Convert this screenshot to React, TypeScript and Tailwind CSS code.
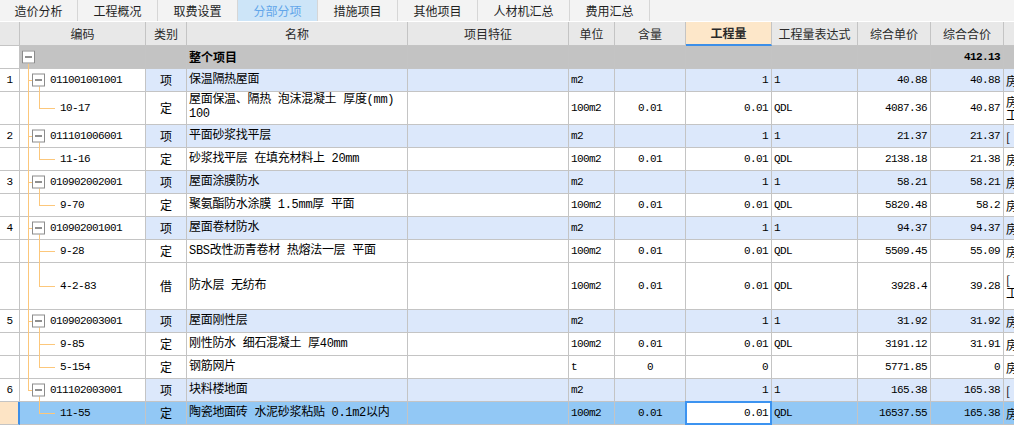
import type { ReactNode } from 'react'
import clsx from 'clsx'

const TABS = [
  { label: '造价分析', w: 'w-[78px]' },
  { label: '工程概况', w: 'w-[80px]' },
  { label: '取费设置', w: 'w-[80px]' },
  { label: '分部分项', w: 'w-[80px]', active: true },
  { label: '措施项目', w: 'w-[80px]' },
  { label: '其他项目', w: 'w-[80px]' },
  { label: '人材机汇总', w: 'w-[92px]' },
  { label: '费用汇总', w: 'w-[80px]' },
]

// column widths incl. right grid line
const W = [
  'w-[20px]',
  'w-[126px]',
  'w-[41px]',
  'w-[221px]',
  'w-[161px]',
  'w-[46px]',
  'w-[71px]',
  'w-[86px]',
  'w-[86px]',
  'w-[73px]',
  'w-[73px]',
  'w-[120px]',
]

const HEADS = ['', '编码', '类别', '名称', '项目特征', '单位', '含量', '工程量', '工程量表达式', '综合单价', '综合合价', '']

const NUM = "font-['Liberation_Mono','Noto_Sans_CJK_SC',monospace] text-[11px] tracking-[-0.6px]"
const MIX = "font-['Liberation_Mono','Noto_Sans_CJK_SC',monospace] text-[12px] tracking-[-0.3px]"
const LINE = 'bg-[#fcc77b]'

type Row = {
  kind: 'item' | 'sub'
  num?: string
  code: string
  cat: string
  name: string[]
  unit: string
  content?: string
  qty: string
  expr?: string
  price: string
  total: string
  tail: string[]
  h: string
  main: 'full' | 'half' | 'none'
  sub?: 'full' | 'half'
  sel?: boolean
  nameTop?: boolean
}

const ROWS: Row[] = [
  { kind: 'item', num: '1', code: '011001001001', cat: '项', name: ['保温隔热屋面'], unit: 'm2', qty: '1', expr: '1', price: '40.88', total: '40.88', tail: ['房'], h: 'h-[23px]', main: 'full' },
  { kind: 'sub', code: '10-17', cat: '定', name: ['屋面保温、隔热 泡沫混凝土 厚度(mm)', '100'], unit: '100m2', content: '0.01', qty: '0.01', expr: 'QDL', price: '4087.36', total: '40.87', tail: ['房', '工'], h: 'h-[33px]', main: 'full', sub: 'half', nameTop: true },
  { kind: 'item', num: '2', code: '011101006001', cat: '项', name: ['平面砂浆找平层'], unit: 'm2', qty: '1', expr: '1', price: '21.37', total: '21.37', tail: ['['], h: 'h-[23px]', main: 'full' },
  { kind: 'sub', code: '11-16', cat: '定', name: ['砂浆找平层 在填充材料上 20mm'], unit: '100m2', content: '0.01', qty: '0.01', expr: 'QDL', price: '2138.18', total: '21.38', tail: ['房'], h: 'h-[23px]', main: 'full', sub: 'half' },
  { kind: 'item', num: '3', code: '010902002001', cat: '项', name: ['屋面涂膜防水'], unit: 'm2', qty: '1', expr: '1', price: '58.21', total: '58.21', tail: ['房'], h: 'h-[23px]', main: 'full' },
  { kind: 'sub', code: '9-70', cat: '定', name: ['聚氨酯防水涂膜 1.5mm厚 平面'], unit: '100m2', content: '0.01', qty: '0.01', expr: 'QDL', price: '5820.48', total: '58.2', tail: ['房'], h: 'h-[23px]', main: 'full', sub: 'half' },
  { kind: 'item', num: '4', code: '010902001001', cat: '项', name: ['屋面卷材防水'], unit: 'm2', qty: '1', expr: '1', price: '94.37', total: '94.37', tail: ['房'], h: 'h-[23px]', main: 'full' },
  { kind: 'sub', code: '9-28', cat: '定', name: ['SBS改性沥青卷材 热熔法一层 平面'], unit: '100m2', content: '0.01', qty: '0.01', expr: 'QDL', price: '5509.45', total: '55.09', tail: ['房'], h: 'h-[23px]', main: 'full', sub: 'full' },
  { kind: 'sub', code: '4-2-83', cat: '借', name: ['防水层 无纺布'], unit: '100m2', content: '0.01', qty: '0.01', expr: 'QDL', price: '3928.4', total: '39.28', tail: ['[', '工'], h: 'h-[47px]', main: 'full', sub: 'half' },
  { kind: 'item', num: '5', code: '010902003001', cat: '项', name: ['屋面刚性层'], unit: 'm2', qty: '1', expr: '1', price: '31.92', total: '31.92', tail: ['房'], h: 'h-[23px]', main: 'full' },
  { kind: 'sub', code: '9-85', cat: '定', name: ['刚性防水 细石混凝土 厚40mm'], unit: '100m2', content: '0.01', qty: '0.01', expr: 'QDL', price: '3191.12', total: '31.91', tail: ['房'], h: 'h-[23px]', main: 'full', sub: 'full' },
  { kind: 'sub', code: '5-154', cat: '定', name: ['钢筋网片'], unit: 't', content: '0', qty: '0', price: '5771.85', total: '0', tail: ['房'], h: 'h-[23px]', main: 'full', sub: 'half' },
  { kind: 'item', num: '6', code: '011102003001', cat: '项', name: ['块料楼地面'], unit: 'm2', qty: '1', expr: '1', price: '165.38', total: '165.38', tail: ['['], h: 'h-[23px]', main: 'half' },
  { kind: 'sub', code: '11-55', cat: '定', name: ['陶瓷地面砖 水泥砂浆粘贴 0.1m2以内'], unit: '100m2', content: '0.01', qty: '0.01', expr: 'QDL', price: '16537.55', total: '165.38', tail: ['房'], h: 'h-[23px]', main: 'none', sub: 'half', sel: true },
]

const MinusBox = ({ className }: { className: string }) => (
  <div className={clsx('absolute w-[13px] h-[13px] border border-[#8c8c8c] bg-white flex items-center justify-center', className)}>
    <div className="w-[7px] h-px bg-[#222]" />
  </div>
)

const Cell = ({
  i,
  className,
  children,
}: {
  i: number
  className?: string
  children?: ReactNode
}) => (
  <div
    className={clsx(
      W[i],
      'shrink-0 h-full border-r border-b border-[#c4c4c4] flex items-center whitespace-nowrap',
      className,
    )}
  >
    {children}
  </div>
)

const TreeCode = ({ row }: { row: Row }) => (
  <Cell i={1} className={clsx('relative', row.sel && 'bg-[#92c8f5]', row.kind === 'item' ? 'pl-[30px]' : 'pl-[40px]')}>
    {row.main === 'full' && <div className={clsx('absolute left-[8px] top-0 -bottom-px w-px', LINE)} />}
    {row.main === 'half' && <div className={clsx('absolute left-[8px] top-0 h-1/2 w-px', LINE)} />}
    {row.kind === 'item' && (
      <>
        <div className={clsx('absolute left-[8px] top-1/2 w-[4px] h-px', LINE)} />
        <div className={clsx('absolute left-[19px] top-1/2 -bottom-px w-px', LINE)} />
        <MinusBox className="left-[12px] top-1/2 -translate-y-1/2" />
      </>
    )}
    {row.kind === 'sub' && (
      <>
        {row.sub === 'full' ? (
          <div className={clsx('absolute left-[19px] top-0 -bottom-px w-px', LINE)} />
        ) : (
          <div className={clsx('absolute left-[19px] top-0 h-1/2 w-px', LINE)} />
        )}
        <div className={clsx('absolute left-[19px] top-1/2 w-[16px] h-px', LINE)} />
      </>
    )}
    <span className={clsx(NUM, 'relative')}>{row.code}</span>
  </Cell>
)

const DataRow = ({ row }: { row: Row }) => {
  const bg = row.sel ? 'bg-[#92c8f5]' : row.kind === 'item' ? 'bg-[#dce8fb]' : 'bg-white'
  return (
    <div className={clsx('flex', row.h)}>
      <Cell i={0} className={clsx('justify-center', row.sel ? 'bg-[#fde4c5] border-r-2 border-r-[#3d8fe8]' : 'bg-white')}>
        <span className={NUM}>{row.num}</span>
      </Cell>
      <TreeCode row={row} />
      <Cell i={2} className={clsx('justify-center', bg)}>
        {row.cat}
      </Cell>
      <Cell i={3} className={clsx('pl-[2px] overflow-hidden', bg, row.nameTop && 'items-start pt-[1px]')}>
        <div className={clsx(MIX, 'flex flex-col leading-[14px]')}>
          {row.name.map((n) => (
            <span key={n}>{n}</span>
          ))}
        </div>
      </Cell>
      <Cell i={4} className={bg} />
      <Cell i={5} className={clsx('pl-[2px]', bg)}>
        <span className={NUM}>{row.unit}</span>
      </Cell>
      <Cell i={6} className={clsx('justify-center', bg)}>
        <span className={NUM}>{row.content}</span>
      </Cell>
      <Cell i={7} className={clsx('relative justify-end pr-[3px]', bg)}>
        {row.sel && <div className="absolute -inset-px border-2 border-[#3c93f0] bg-white" />}
        <span className={clsx(NUM, 'relative')}>{row.qty}</span>
      </Cell>
      <Cell i={8} className={clsx('pl-[2px]', bg)}>
        <span className={NUM}>{row.expr}</span>
      </Cell>
      <Cell i={9} className={clsx('justify-end pr-[3px]', bg)}>
        <span className={NUM}>{row.price}</span>
      </Cell>
      <Cell i={10} className={clsx('justify-end pr-[3px]', bg)}>
        <span className={NUM}>{row.total}</span>
      </Cell>
      <Cell i={11} className={clsx('pl-[2px] overflow-hidden', bg)}>
        <div className="flex flex-col leading-[13px]">
          {row.tail.map((t) => (
            <span key={t}>{t}</span>
          ))}
        </div>
      </Cell>
    </div>
  )
}

export default function App() {
  return (
    <div className="w-[1014px] h-[441px] overflow-hidden bg-white text-[12px] text-black font-['Noto_Sans_CJK_SC',sans-serif] leading-[14px]">
      {/* tabs */}
      <div className="flex h-[22px] bg-[#f3f3f3] border-b border-white">
        {TABS.map((t) => (
          <div
            key={t.label}
            className={clsx(
              t.w,
              'h-full flex items-center justify-center border-r border-[#d6d6d6]',
              t.active ? 'bg-[#cde5f8] text-[#62a6ea]' : 'text-[#1f1f1f]',
            )}
          >
            {t.label}
          </div>
        ))}
      </div>

      {/* header */}
      <div className="flex h-[24px] text-[#2a2a2a]">
        {HEADS.map((h, i) => (
          <Cell
            key={i}
            i={i}
            className={clsx(
              'justify-center',
              i === 7 ? 'bg-[#fde7c9] font-bold border-b-2 border-b-[#3d8fe8]' : 'bg-[#e8e8e8]',
            )}
          >
            {h}
          </Cell>
        ))}
      </div>

      {/* whole project row */}
      <div className="flex h-[23px]">
        <Cell i={0} className="bg-white" />
        <Cell i={1} className="relative bg-[#c3c3c3]">
          <div className={clsx('absolute left-[8px] top-1/2 -bottom-px w-px', LINE)} />
          <MinusBox className="left-[2px] top-1/2 -translate-y-1/2" />
        </Cell>
        <Cell i={2} className="bg-[#c3c3c3]" />
        <Cell i={3} className="bg-[#c3c3c3] pl-[2px] font-bold">
          整个项目
        </Cell>
        {[4, 5, 6, 7, 8, 9].map((i) => (
          <Cell key={i} i={i} className="bg-[#c3c3c3]" />
        ))}
        <Cell i={10} className="bg-[#c3c3c3] justify-end pr-[3px]">
          <span className={clsx(NUM, 'font-bold')}>412.13</span>
        </Cell>
        <Cell i={11} className="bg-[#c3c3c3]" />
      </div>

      {ROWS.map((r) => (
        <DataRow key={r.code} row={r} />
      ))}
    </div>
  )
}
